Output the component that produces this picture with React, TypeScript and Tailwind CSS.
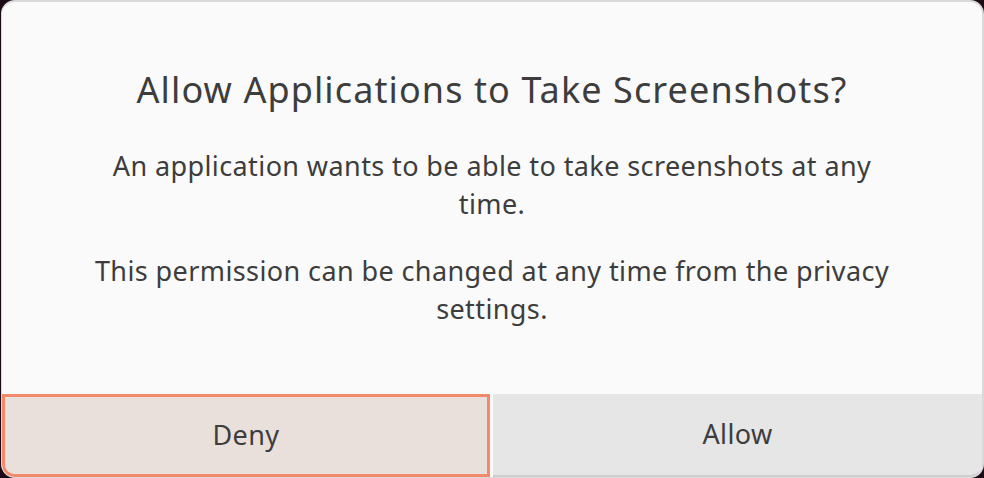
import React from 'react';

const App: React.FC = () => {
  return (
    <div className="w-[984px] h-[478px] bg-[#1c0b16] pl-[1px] overflow-hidden" style={{ fontFamily: '"Noto Sans", "Open Sans", sans-serif' }}>
      <div className="flex flex-col h-full bg-[#fafafa] border border-t-2 border-r-2 border-[#d9d9d9] rounded-[14px] overflow-hidden">
        <div className="flex-1 flex flex-col items-center px-[40px] pt-[64px] text-[#3d3d3d] text-center">
          <h1 className="text-[36px] leading-[48px] font-normal tracking-[1.1px]">Allow Applications to Take Screenshots?</h1>
          <p className="mt-[33px] text-[27px] leading-[38px] tracking-[0.4px] max-w-[810px]">
            An application wants to be able to take screenshots at any time.
          </p>
          <p className="mt-[29px] text-[27px] leading-[38px] tracking-[0.4px] max-w-[810px]">
            This permission can be changed at any time from the privacy settings.
          </p>
        </div>
        <div className="flex h-[83px] gap-[3px]">
          <button className="w-[488px] flex items-center justify-center bg-[#e9e0db] border-[3px] border-[#f2896a] rounded-bl-[12px] text-[27px] tracking-[0.4px] text-[#3d3d3d]">
            Deny
          </button>
          <button className="flex-1 flex items-center justify-center bg-[#e6e6e6] border-b-2 border-[#cfcfcf] rounded-br-[12px] text-[27px] tracking-[0.4px] text-[#3d3d3d]">
            Allow
          </button>
        </div>
      </div>
    </div>
  );
};

export default App;
